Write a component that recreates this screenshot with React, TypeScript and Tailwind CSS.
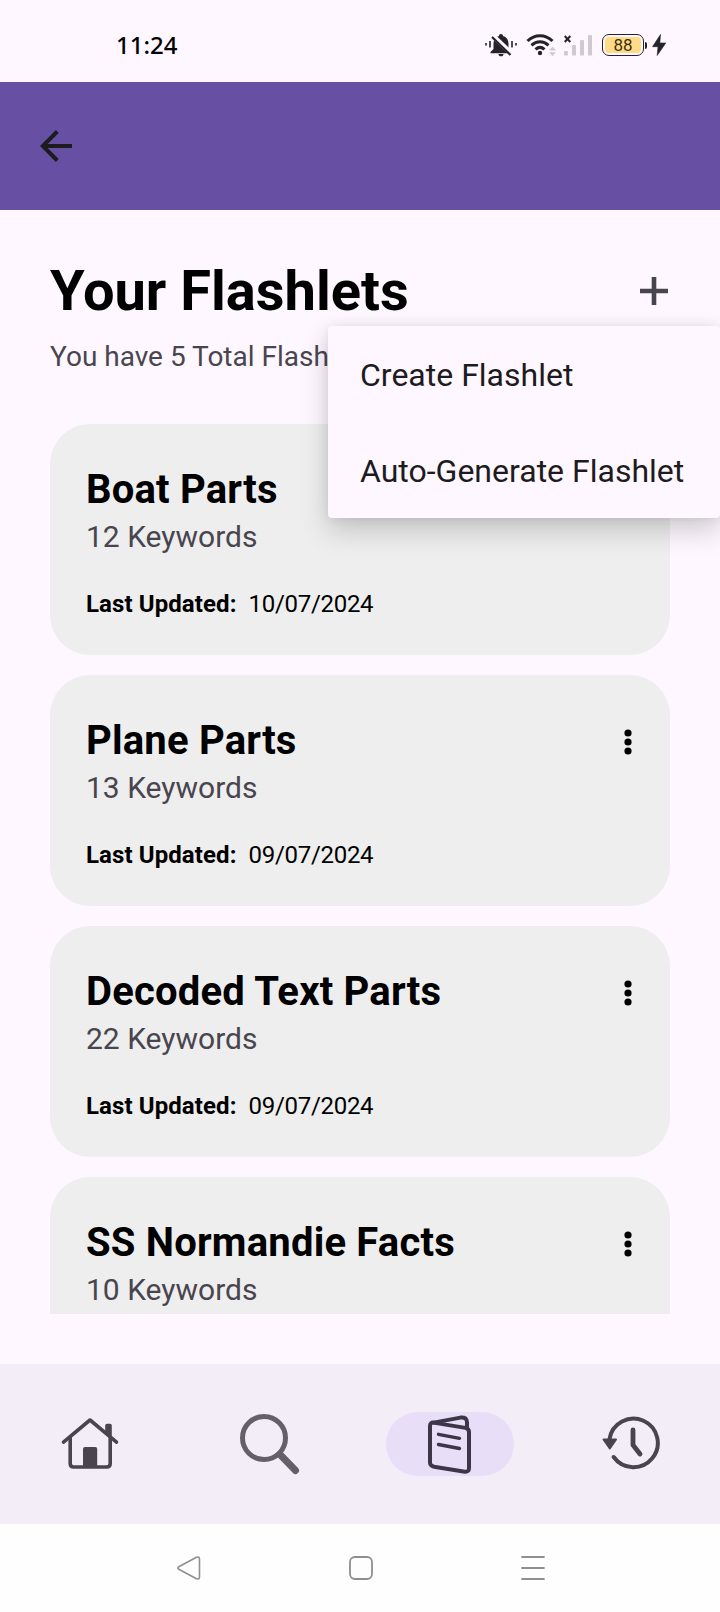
import type { ReactNode } from 'react';

type Flashlet = { title: string; keywords: number; updated: string };

const flashlets: Flashlet[] = [
  { title: 'Boat Parts', keywords: 12, updated: '10/07/2024' },
  { title: 'Plane Parts', keywords: 13, updated: '09/07/2024' },
  { title: 'Decoded Text Parts', keywords: 22, updated: '09/07/2024' },
  { title: 'SS Normandie Facts', keywords: 10, updated: '' },
];

function StatusBar() {
  return (
    <div className="flex h-[82px] shrink-0 items-center justify-between pt-2 pr-[53px] pl-[116px]">
      <span className="font-['Noto_Sans'] text-[24px] leading-[34px] font-medium text-black">11:24</span>
      <div className="flex items-center text-[#252328]">
        <svg className="h-6 w-8" viewBox="486 33 32 24" fill="currentColor">
          <path d="M502 34c1.300 0 2 .8 2 2 3.600 1 5.500 3.800 5.500 7.500v5.500l3 3v1.300h-21V52l3-3v-5.500c0-3.700 1.900-6.500 5.500-7.500 0-1.200.7-2 2-2z" />
          <path d="M499.500 54h5c0 1.400-1 2.300-2.500 2.300s-2.500-.9-2.500-2.300z" />
          <path d="M493.500 35.500l20 19" stroke="#fef7ff" strokeWidth="5" />
          <path d="M493 37l18.500 18" stroke="currentColor" strokeWidth="2.200" />
          <path d="M487 43v2.500M491 41v6.500M513 41v6.500M517 43v2.500" stroke="currentColor" strokeWidth="1.600" />
        </svg>
        <svg className="ml-[9px] h-6 w-[31px]" viewBox="527 33 31 24" fill="none">
          <g stroke="currentColor" strokeWidth="3">
            <path d="M528.500 41c7.300-6.900 17.700-6.900 25 0" />
            <path d="M532.500 45.300c5-4.600 12-4.600 17 0" />
            <path d="M536.500 49.400c2.800-2.500 6.200-2.500 9 0" />
          </g>
          <circle cx="541" cy="53" r="2.200" fill="currentColor" />
          <path d="M550 50.500l3.500-4 3.500 4zM550 52.300h7l-3.500 4z" fill="#cfc9d0" />
        </svg>
        <svg className="ml-[7px] h-6 w-7" viewBox="565 33 28 24" fill="none">
          <g fill="#cfc9d0">
            <rect x="565" y="51" width="4" height="4.500" rx="1" />
            <rect x="573" y="45" width="4" height="10.500" rx="1" />
            <rect x="581" y="40" width="4" height="15.500" rx="1" />
            <rect x="589" y="35" width="4" height="20.500" rx="1" />
          </g>
          <path d="M565.700 36l5.600 6M571.300 36l-5.600 6" stroke="currentColor" strokeWidth="2" />
        </svg>
        <div className="ml-[10px] flex items-center">
          <div className="flex h-[22px] w-[42px] rounded-[7px] border-[1.500px] border-[#252328] p-[2px]">
            <div className="flex flex-1 items-center justify-center rounded-[4px] bg-[#ffdb85] font-['Roboto'] text-[17px] leading-none text-[#3b2f14]">
              88
            </div>
          </div>
          <div className="ml-px h-[7px] w-[2px] rounded-r bg-[#252328]" />
        </div>
        <svg className="ml-[5px] h-[22px] w-[15px]" viewBox="652 34 15 22" fill="currentColor">
          <path d="M660.500 34.500l-8 12.200h5.500l-.8 8.800 8.600-12.500h-6z" stroke="currentColor" strokeWidth=".6" strokeLinejoin="round" />
        </svg>
      </div>
    </div>
  );
}

function AppBar() {
  return (
    <header className="flex h-32 shrink-0 items-center bg-[#6750a4] pl-10">
      <svg className="h-8 w-8" viewBox="0 0 32 32" fill="none" stroke="#1d1b20" strokeWidth="4">
        <path d="M32 16H4M17.300 1.500L2.800 16l14.500 14.500" />
      </svg>
    </header>
  );
}

function MoreIcon() {
  return (
    <svg className="h-[26px] w-2" viewBox="0 0 8 26" fill="#000">
      <circle cx="4" cy="4" r="3.600" />
      <circle cx="4" cy="13" r="3.600" />
      <circle cx="4" cy="22" r="3.600" />
    </svg>
  );
}

function FlashletCard({ title, keywords, updated }: Flashlet) {
  return (
    <article className="flex h-[231px] shrink-0 items-start justify-between rounded-[40px] bg-[#eeeeee] pt-[42px] pr-[38px] pl-9">
      <div>
        <h2 className="text-[40px] leading-[48px] font-bold tracking-[0.2px] text-black">{title}</h2>
        <p className="mt-[6px] text-[30px] leading-[34px] text-[#49454f]">{keywords} Keywords</p>
        {updated && (
          <p className="mt-9 flex gap-3 text-[24px] leading-7 text-black">
            <span className="font-bold tracking-[0.1px]">Last Updated:</span>
            <span className="tracking-[-0.3px]">{updated}</span>
          </p>
        )}
      </div>
      <div className="pt-[11.5px]">
        <MoreIcon />
      </div>
    </article>
  );
}

function OverflowMenu() {
  return (
    <div className="absolute top-[326px] right-0 flex w-[392px] flex-col rounded-[4px] bg-[#fef7ff] text-[32px] text-[#1d1b20] shadow-[0_12px_28px_rgba(0,0,0,0.19),0_0_12px_rgba(0,0,0,0.07)]">
      <button className="flex h-24 items-center pt-[2px] pl-8 whitespace-nowrap">Create Flashlet</button>
      <button className="flex h-24 items-center pt-[2px] pl-8 whitespace-nowrap">Auto-Generate Flashlet</button>
    </div>
  );
}

function NavItem({ active = false, children }: { active?: boolean; children: ReactNode }) {
  return (
    <button
      className={
        active
          ? 'flex h-16 w-32 items-center justify-center rounded-full bg-[#e8def8] text-[#3d3548]'
          : 'flex h-16 w-32 items-center justify-center text-[#49454f]'
      }
    >
      {children}
    </button>
  );
}

function BottomNav() {
  return (
    <nav className="flex h-40 shrink-0 items-center bg-[#f3edf7]">
      <div className="flex flex-1 justify-center">
        <NavItem>
          <svg className="h-16 w-16" viewBox="58 1412 64 64" fill="none" stroke="currentColor" strokeWidth="3.600" strokeLinecap="round" strokeLinejoin="round">
            <path d="M63.500 1442.200L90 1420l26.500 22.200" />
            <path d="M70.200 1437v26.500q0 3.500 3.500 3.500h33q3.500 0 3.500-3.500V1437" />
            <path d="M107 1425.500h3v10l-3-2.500z" />
            <rect x="84" y="1448" width="12.200" height="19" rx="1" fill="currentColor" strokeWidth="2" />
          </svg>
        </NavItem>
      </div>
      <div className="flex flex-1 justify-center">
        <NavItem>
          <svg className="h-16 w-16 text-[#655f69]" viewBox="238 1412 64 64" fill="none" stroke="currentColor" strokeLinecap="round">
            <circle cx="264" cy="1438" r="21.500" strokeWidth="5" />
            <path d="M280.500 1455l15 15.500" strokeWidth="7" />
          </svg>
        </NavItem>
      </div>
      <div className="flex flex-1 justify-center">
        <NavItem active>
          <svg className="h-16 w-16" viewBox="418 1412 64 64" fill="none" stroke="currentColor" strokeWidth="4" strokeLinecap="round" strokeLinejoin="round">
            <path d="M433.500 1422.600l32 5.300q3.500.7 3.500 4v36q0 4-4 3.800l-29.500-4.700q-5.500-.8-5.500-4.500V1426q0-3.600 3.500-3.400z" />
            <path d="M433.500 1422.600l27-5q6.500-.8 6.500 5v6" />
            <path d="M438.500 1434.300l21 4M438.500 1444.500l21 4" strokeWidth="3.400" />
          </svg>
        </NavItem>
      </div>
      <div className="flex flex-1 justify-center">
        <NavItem>
          <svg className="h-16 w-16" viewBox="598 1412 64 64" fill="none" stroke="currentColor" strokeWidth="4" strokeLinecap="round" strokeLinejoin="round">
            <path d="M609.500 1439a24.300 24.300 0 1 1 4.200 18" />
            <path d="M603.500 1439.500h12.500l-6.200 9z" fill="currentColor" strokeWidth="2" />
            <path d="M633 1430v15l7 9" strokeWidth="4.800" />
          </svg>
        </NavItem>
      </div>
    </nav>
  );
}

function SystemNav() {
  return (
    <div className="flex h-[88px] shrink-0 items-center justify-center gap-[148px] bg-[#fefefe] pl-[2px]">
      <svg className="h-6 w-6" viewBox="0 0 24 24" fill="none" stroke="#8f8f8f" strokeWidth="1.600" strokeLinejoin="round">
        <path d="M1.800 10.700L19.500 1.300q3-1 3 1.800v17.800q0 2.800-3 1.800L1.800 13.300q-2-1.300 0-2.600z" />
      </svg>
      <svg className="h-6 w-6" viewBox="0 0 24 24" fill="none" stroke="#8f8f8f" strokeWidth="1.800">
        <rect x="1" y="1" width="22" height="22" rx="5" />
      </svg>
      <svg className="h-6 w-6" viewBox="0 0 24 24" fill="none" stroke="#8f8f8f" strokeWidth="1.800" strokeLinecap="round">
        <path d="M1 1h22M1 12h22M1 23h22" />
      </svg>
    </div>
  );
}

export default function App() {
  return (
    <div className="relative flex h-[1612px] w-[720px] flex-col overflow-hidden bg-[#fef7ff] font-['Roboto',sans-serif]">
      <StatusBar />
      <AppBar />
      <main className="flex h-[1154px] flex-col px-[50px] pt-12 pb-[50px]">
        <div className="flex items-center justify-between pr-[2px]">
          <h1 className="text-[56px] leading-[66px] font-bold text-black">Your Flashlets</h1>
          <svg className="h-7 w-7" viewBox="0 0 28 28" fill="none" stroke="#49454f" strokeWidth="4.600">
            <path d="M14 0v28M0 14h28" />
          </svg>
        </div>
        <p className="mt-[17px] text-[28px] leading-8 text-[#49454f]">You have 5 Total Flashlets</p>
        <div className="mt-[51px] flex min-h-0 flex-1 flex-col gap-5 overflow-hidden">
          {flashlets.map((item) => (
            <FlashletCard key={item.title} {...item} />
          ))}
        </div>
      </main>
      <BottomNav />
      <SystemNav />
      <OverflowMenu />
    </div>
  );
}
